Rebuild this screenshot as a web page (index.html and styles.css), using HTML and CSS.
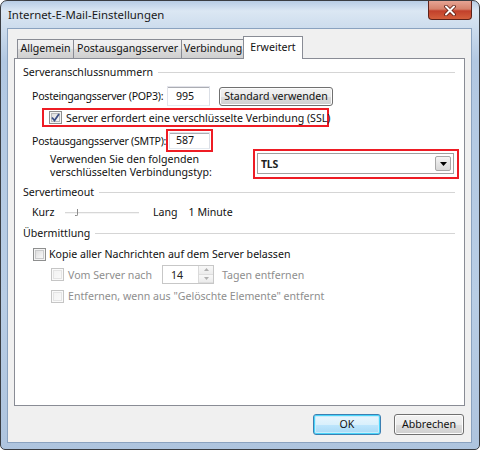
FILE: index.html
```html
<!DOCTYPE html>
<html>
<head>
<meta charset="utf-8">
<link rel="stylesheet" href="styles.css">
</head>
<body>
<div class="window">
  <div class="titlebar">
    <span class="title">Internet-E-Mail-Einstellungen</span>
    <div class="close">
      <svg width="14" height="11" viewBox="0 0 14 11"><path d="M3 1.5 L11 9.5 M11 1.5 L3 9.5" stroke="#5a1a10" stroke-width="3.6" stroke-linecap="round"/><path d="M3 1.5 L11 9.5 M11 1.5 L3 9.5" stroke="#ffffff" stroke-width="2" stroke-linecap="round"/></svg>
    </div>
  </div>
  <div class="client">
    <div class="tabs">
      <div class="tab t1">Allgemein</div>
      <div class="tab t2">Postausgangsserver</div>
      <div class="tab t3">Verbindung</div>
      <div class="tab active">Erweitert</div>
    </div>
    <div class="panel">
      <div class="group">Serveranschlussnummern</div>
      <div class="row r-pop">
        <span class="label"><span class="lt">Posteingangsserver (POP3):</span></span>
        <div class="input in-pop">995</div>
        <div class="btn std">Standard verwenden</div>
      </div>
      <div class="redbox rb-ssl">
        <span class="cb checked"><svg width="9" height="9" viewBox="0 0 9 9"><path d="M1 4.5 L3.5 7.5 L8 1" fill="none" stroke="#3b4f86" stroke-width="1.8"/></svg></span>
        <span class="cbtext">Server erfordert eine verschlüsselte Verbindung (SSL)</span>
      </div>
      <div class="row r-smtp">
        <span class="label l-smtp"><span class="lt">Postausgangsserver (SMTP):</span></span>
        <div class="redbox rb-port"><div class="input in-smtp">587</div></div>
      </div>
      <div class="row r-enc">
        <div class="enc-text">Verwenden Sie den folgenden<br>verschlüsselten Verbindungstyp:</div>
        <div class="redbox rb-sel">
          <div class="select"><span class="sel-val">TLS</span><span class="arrow"><svg width="7" height="4" viewBox="0 0 7 4"><path d="M0 0 H7 L3.5 4 Z" fill="#000"/></svg></span></div>
        </div>
      </div>
      <div class="group g2">Servertimeout</div>
      <div class="row r-slider">
        <span class="kurz">Kurz</span>
        <div class="slider"><span class="thumb"></span></div>
        <span class="lang">Lang</span>
        <span>1 Minute</span>
      </div>
      <div class="group g3">Übermittlung</div>
      <div class="row r-kopie">
        <span class="cb"></span>
        <span class="cbtext">Kopie aller Nachrichten auf dem Server belassen</span>
      </div>
      <div class="row r-vom disabled">
        <span class="cb dis"></span>
        <span class="cbtext vom">Vom Server nach</span>
        <div class="spinner"><span class="spin-val">14</span><span class="spin-btns"><span class="sb"><svg width="5" height="3" viewBox="0 0 5 3"><path d="M0 3 H5 L2.5 0 Z" fill="#b0b0b0"/></svg></span><span class="sb"><svg width="5" height="3" viewBox="0 0 5 3"><path d="M0 0 H5 L2.5 3 Z" fill="#b0b0b0"/></svg></span></span></div>
        <span class="tagen">Tagen entfernen</span>
      </div>
      <div class="row r-entf disabled">
        <span class="cb dis"></span>
        <span class="cbtext">Entfernen, wenn aus "Gelöschte Elemente" entfernt</span>
      </div>
    </div>
    <div class="buttons">
      <div class="btn ok">OK</div>
      <div class="btn cancel">Abbrechen</div>
    </div>
  </div>
</div>
</body>
</html>
```
FILE: styles.css
```css
* { box-sizing: border-box; }
html, body { margin: 0; padding: 0; background: #ffffff; }
body {
  font-family: "Noto Sans", "Open Sans", sans-serif;
  font-size: 10.6px;
  color: #111;
  white-space: nowrap;
}
.window {
  width: 480px;
  height: 450px;
  border: 1px solid #3a3d42;
  border-radius: 7px 7px 5px 5px;
  background: linear-gradient(180deg, #b7cce4 0px, #dbe7f3 10px, #cfdeee 24px, #b2c8e2 60px, #b8cde5 300px, #aec4de 450px);
  padding-bottom: 6px;
  overflow: hidden;
}
.titlebar {
  height: 27px;
  display: flex;
  align-items: flex-start;
  padding-left: 7px;
}
.title {
  font-size: 11.4px;
  line-height: 14px;
  margin-top: 7px;
  color: #1a1a1a;
}
.close {
  margin-left: auto;
  margin-right: 7px;
  width: 44px;
  height: 19px;
  border: 1px solid #5e2219;
  border-top: none;
  border-radius: 0 0 4px 4px;
  background: linear-gradient(180deg, #e6a494 0%, #d5826c 45%, #c2402b 55%, #d45f3c 100%);
  display: flex;
  align-items: center;
  justify-content: center;
}
.client {
  margin: 0 7px 0 6px;
  height: 415px;
  border: 1px solid #8aa2bf;
  background: #f0f0f0;
  padding: 7px 7px 7px 6px;
}
.tabs {
  display: flex;
  height: 22px;
  padding-left: 3px;
  position: relative;
  z-index: 1;
}
.tab {
  height: 19px;
  margin-top: 3px;
  border: 1px solid #898c95;
  border-bottom: none;
  border-right: none;
  background: linear-gradient(180deg, #f2f2f2 0%, #ebebeb 50%, #dddddd 51%, #cfcfcf 100%);
  text-align: center;
  line-height: 17px;
  color: #111;
}
.t1 { width: 56px; }
.t2 { width: 108px; }
.t3 { width: 63px; border-right: none; }
.tab.active {
  width: 60px;
  height: 23px;
  margin-top: 0;
  border-right: 1px solid #898c95;
  background: #ffffff;
  line-height: 21px;
  margin-left: -1px;
}
.panel {
  width: 451px;
  height: 348px;
  border: 1px solid #898c95;
  background: #ffffff;
  padding: 6px 9px 0 8px;
}
.group {
  display: flex;
  align-items: center;
  height: 14px;
  line-height: 14px;
  color: #111;
}
.group::after {
  content: "";
  flex: 1;
  border-top: 1px solid #d5d5d5;
  margin-left: 5px;
}
.row {
  display: flex;
  align-items: center;
  line-height: 14px;
}
.label { width: 144px; padding-left: 9px; flex-shrink: 0; }
.lt { letter-spacing: -0.25px; }
.l-smtp { width: 143px; }
.r-pop { margin-top: 7px; height: 20px; }
.input {
  height: 20px;
  border: 1px solid #abadb3;
  border-top-color: #e2e3ea;
  border-left-color: #e2e3ea;
  border-right-color: #dbdfe6;
  border-bottom-color: #e3e9ef;
  background: #ffffff;
  padding-left: 8px;
  line-height: 18px;
  box-shadow: inset 0 1px 0 #abadb3;
}
.in-pop { width: 43px; }
.btn {
  border: 1px solid #707070;
  border-radius: 3px;
  background: linear-gradient(180deg, #f2f2f2 0%, #ebebeb 50%, #dddddd 51%, #cfcfcf 100%);
  text-align: center;
  box-shadow: inset 0 0 0 1px #fcfcfc;
}
.std {
  margin-left: 9px;
  width: 114px;
  height: 19px;
  line-height: 17px;
  margin-top: 1px;
}
.redbox {
  border: 2px solid #ee1c24;
  flex-shrink: 0;
}
.rb-ssl {
  margin-top: 2px;
  margin-left: 19px;
  width: 287px;
  height: 19px;
  display: flex;
  align-items: center;
  padding-left: 5px;
}
.cb {
  width: 13px;
  height: 13px;
  flex-shrink: 0;
  border: 1px solid #8e8f8f;
  background: linear-gradient(135deg, #d6d6d6 0%, #f0f0f0 60%, #ffffff 100%);
  box-shadow: inset 0 0 0 1px #f4f4f4, inset 0 0 0 2px #c9cacb;
  display: flex;
  align-items: center;
  justify-content: center;
}
.cb.checked { box-shadow: inset 0 0 0 1px #f4f4f4, inset 0 0 0 2px #b7b9bb; }
.cb.dis {
  border-color: #c5c5c5;
  background: linear-gradient(135deg, #f1f1f1 0%, #fbfbfb 100%);
  box-shadow: inset 0 0 0 1px #fafafa, inset 0 0 0 2px #e4e4e4;
}
.cbtext { margin-left: 4px; white-space: nowrap; line-height: 14px; }
.r-smtp { margin-top: 2px; height: 23px; }
.rb-port {
  width: 47px;
  height: 23px;
  padding: 1px;
}
.in-smtp { width: 41px; height: 17px; line-height: 15px; padding-left: 6px; }
.r-enc { margin-top: -3px; align-items: flex-start; }
.enc-text {
  width: 230px;
  flex-shrink: 0;
  padding-left: 27px;
  line-height: 13px;
  padding-top: 4px;
}
.rb-sel {
  width: 206px;
  height: 30px;
  padding: 2px 0 0 2px;
}
.select {
  width: 197px;
  height: 21px;
  border: 1px solid #a2a2a2;
  border-top-color: #9e9e9e;
  background: #ffffff;
  display: flex;
  align-items: center;
  padding-left: 3px;
}
.sel-val { flex: 1; font-weight: bold; font-size: 10.5px; letter-spacing: -0.2px; color: #222; }
.arrow {
  width: 16px;
  height: 15px;
  margin-right: 2px;
  border: 1px solid #a8a8a8;
  border-radius: 2px;
  background: linear-gradient(180deg, #f5f5f5 0%, #e5e5e5 50%, #d8d8d8 100%);
  display: flex;
  align-items: center;
  justify-content: center;
}
.g2 { margin-top: 6px; }
.r-slider { margin-top: 6px; height: 14px; }
.kurz { padding-left: 9px; width: 42px; flex-shrink: 0; }
.slider {
  width: 74px;
  height: 2px;
  background: #d7d7d7;
  border-bottom: 1px solid #f4f4f4;
  position: relative;
  margin-top: 1px;
}
.thumb {
  position: absolute;
  left: 10px;
  top: -3px;
  width: 3px;
  height: 7px;
  border: 1px solid #8a8a8a;
  border-top: none;
  border-left: none;
  border-radius: 0 0 2px 0;
}
.lang { margin-left: 14px; margin-right: 11px; }
.g3 { margin-top: 7px; }
.r-kopie { margin-top: 7px; height: 14px; padding-left: 10px; }
.r-kopie .cbtext { margin-left: 3px; }
.disabled { color: #8e8e8e; }
.r-vom { margin-top: 4px; height: 19px; padding-left: 28px; }
.vom { width: 94px; }
.spinner {
  width: 52px;
  height: 19px;
  border: 1px solid #c7c7c7;
  background: #fff;
  display: flex;
  align-items: center;
  padding-left: 8px;
  color: #222;
}
.spin-val { flex: 1; }
.spin-btns {
  width: 15px;
  height: 17px;
  display: flex;
  flex-direction: column;
  border-left: 1px solid #dadada;
}
.sb {
  flex: 1;
  display: flex;
  align-items: center;
  justify-content: center;
  background: linear-gradient(180deg, #f8f8f8, #ececec);
  border-bottom: 1px solid #dedede;
}
.tagen { margin-left: 8px; }
.r-entf { margin-top: 5px; height: 14px; padding-left: 28px; }
.buttons {
  display: flex;
  justify-content: flex-end;
  margin-top: 8px;
  gap: 13px;
  padding-right: 0;
}
.ok, .cancel { height: 21px; line-height: 19px; }
.ok {
  width: 68px;
  border-color: #3c7fb1;
  box-shadow: inset 0 0 0 1px #48d4fa, inset 0 0 0 2px #c8ecfb;
  background: linear-gradient(180deg, #eaf6fd 0%, #d9f0fc 50%, #bee6fd 51%, #a7d9f5 100%);
}
.cancel { width: 70px; }
```
